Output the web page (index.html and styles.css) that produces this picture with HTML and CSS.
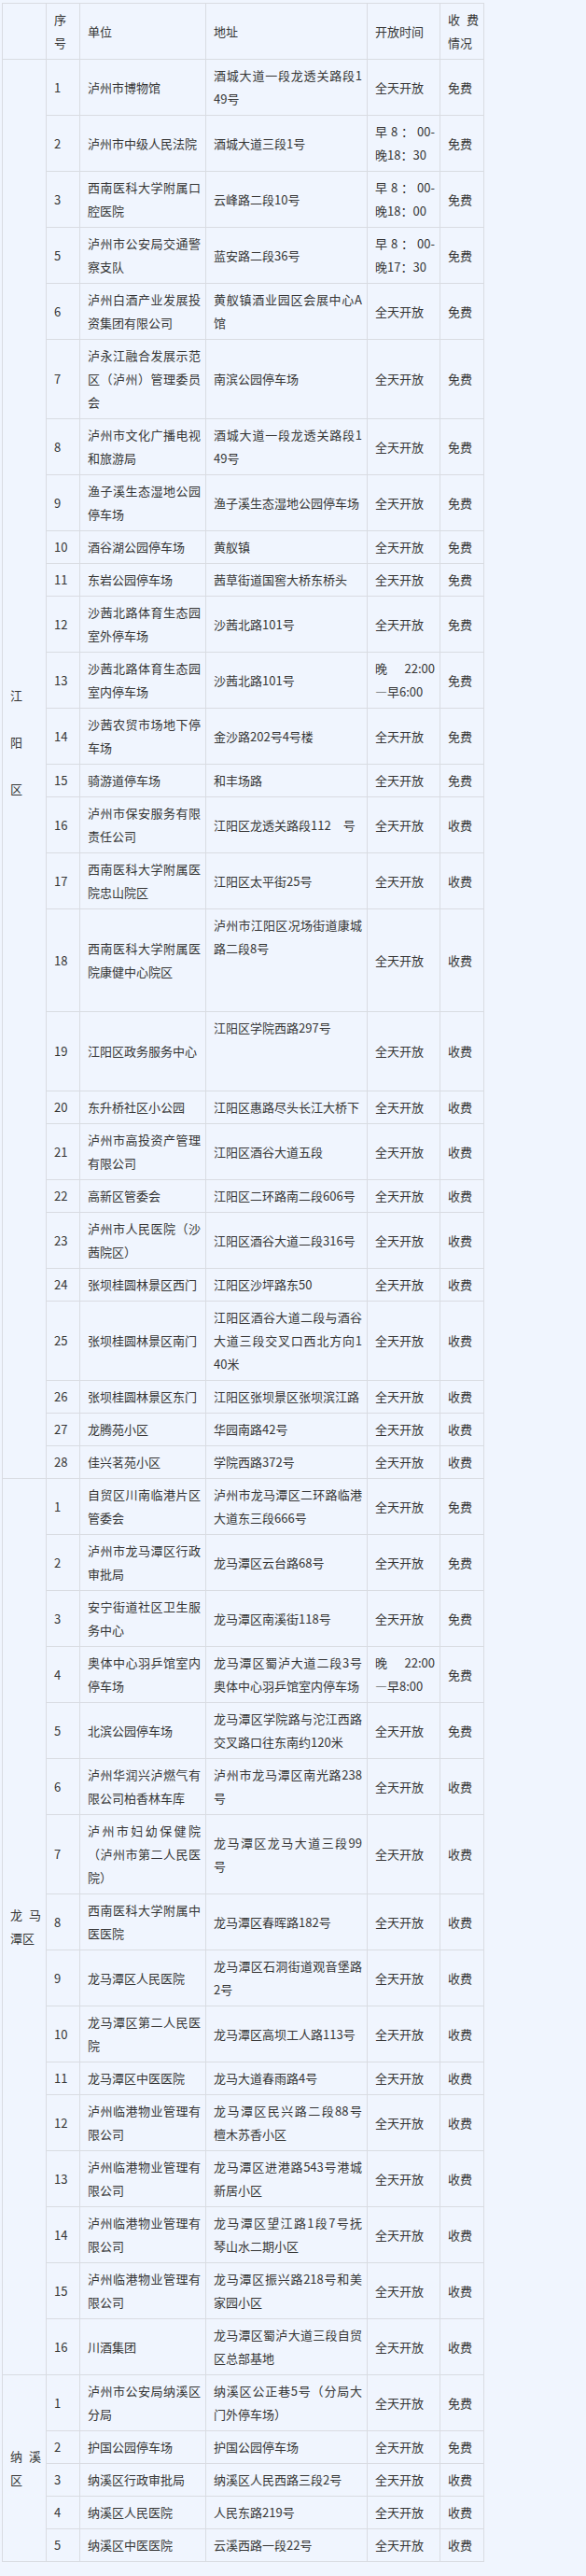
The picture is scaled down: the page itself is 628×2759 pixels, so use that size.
FILE: index.html
```html
<!DOCTYPE html>
<html lang="zh-CN">
<head>
<meta charset="utf-8">
<title>停车场开放名单</title>
<link rel="stylesheet" href="styles.css">
</head>
<body>
<div class="wrap">
<table class="list">
<colgroup>
<col class="w-dist"><col class="w-no"><col class="w-unit"><col class="w-addr"><col class="w-time"><col class="w-fee">
</colgroup>
<thead>
<tr><th></th><th>序<br>号</th><th>单位</th><th>地址</th><th>开放时间</th><th><span class="j">收费</span>情况</th></tr>
</thead>
<tbody>
<tr><td rowspan="27" class="dist jy">江<br><br>阳<br><br>区</td><td>1</td><td>泸州市博物馆</td><td><span class="j">酒城大道一段龙透关路段1</span>49号</td><td>全天开放</td><td>免费</td></tr>
<tr><td>2</td><td>泸州市中级人民法院</td><td>酒城大道三段1号</td><td><span class="j">早8：00-</span>晚18：30</td><td>免费</td></tr>
<tr><td>3</td><td><span class="j">西南医科大学附属口</span>腔医院</td><td>云峰路二段10号</td><td><span class="j">早8：00-</span>晚18：00</td><td>免费</td></tr>
<tr><td>5</td><td><span class="j">泸州市公安局交通警</span>察支队</td><td>蓝安路二段36号</td><td><span class="j">早8：00-</span>晚17：30</td><td>免费</td></tr>
<tr><td>6</td><td><span class="j">泸州白酒产业发展投</span>资集团有限公司</td><td><span class="j">黄舣镇酒业园区会展中心A</span>馆</td><td>全天开放</td><td>免费</td></tr>
<tr><td>7</td><td><span class="j">泸永江融合发展示范</span><span class="j">区（泸州）管理委员</span>会</td><td>南滨公园停车场</td><td>全天开放</td><td>免费</td></tr>
<tr><td>8</td><td><span class="j">泸州市文化广播电视</span>和旅游局</td><td><span class="j">酒城大道一段龙透关路段1</span>49号</td><td>全天开放</td><td>免费</td></tr>
<tr><td>9</td><td><span class="j">渔子溪生态湿地公园</span>停车场</td><td>渔子溪生态湿地公园停车场</td><td>全天开放</td><td>免费</td></tr>
<tr><td>10</td><td>酒谷湖公园停车场</td><td>黄舣镇</td><td>全天开放</td><td>免费</td></tr>
<tr><td>11</td><td>东岩公园停车场</td><td>茜草街道国窖大桥东桥头</td><td>全天开放</td><td>免费</td></tr>
<tr><td>12</td><td><span class="j">沙茜北路体育生态园</span>室外停车场</td><td>沙茜北路101号</td><td>全天开放</td><td>免费</td></tr>
<tr><td>13</td><td><span class="j">沙茜北路体育生态园</span>室内停车场</td><td>沙茜北路101号</td><td><span class="j">晚 22:00</span>—早6:00</td><td>免费</td></tr>
<tr><td>14</td><td><span class="j">沙茜农贸市场地下停</span>车场</td><td>金沙路202号4号楼</td><td>全天开放</td><td>免费</td></tr>
<tr><td>15</td><td>骑游道停车场</td><td>和丰场路</td><td>全天开放</td><td>免费</td></tr>
<tr><td>16</td><td><span class="j">泸州市保安服务有限</span>责任公司</td><td>江阳区龙透关路段112　号</td><td>全天开放</td><td>收费</td></tr>
<tr><td>17</td><td><span class="j">西南医科大学附属医</span>院忠山院区</td><td>江阳区太平街25号</td><td>全天开放</td><td>收费</td></tr>
<tr><td>18</td><td><span class="j">西南医科大学附属医</span>院康健中心院区</td><td class="tail2"><span class="j">泸州市江阳区况场街道康城</span>路二段8号</td><td>全天开放</td><td>收费</td></tr>
<tr><td>19</td><td>江阳区政务服务中心</td><td class="tail2">江阳区学院西路297号</td><td>全天开放</td><td>收费</td></tr>
<tr><td>20</td><td>东升桥社区小公园</td><td>江阳区惠路尽头长江大桥下</td><td>全天开放</td><td>收费</td></tr>
<tr><td>21</td><td><span class="j">泸州市高投资产管理</span>有限公司</td><td>江阳区酒谷大道五段</td><td>全天开放</td><td>收费</td></tr>
<tr><td>22</td><td>高新区管委会</td><td>江阳区二环路南二段606号</td><td>全天开放</td><td>收费</td></tr>
<tr><td>23</td><td><span class="j">泸州市人民医院（沙</span>茜院区）</td><td>江阳区酒谷大道二段316号</td><td>全天开放</td><td>收费</td></tr>
<tr><td>24</td><td>张坝桂圆林景区西门</td><td>江阳区沙坪路东50</td><td>全天开放</td><td>收费</td></tr>
<tr><td>25</td><td>张坝桂圆林景区南门</td><td><span class="j">江阳区酒谷大道二段与酒谷</span><span class="j">大道三段交叉口西北方向1</span>40米</td><td>全天开放</td><td>收费</td></tr>
<tr><td>26</td><td>张坝桂圆林景区东门</td><td>江阳区张坝景区张坝滨江路</td><td>全天开放</td><td>收费</td></tr>
<tr><td>27</td><td>龙腾苑小区</td><td>华园南路42号</td><td>全天开放</td><td>收费</td></tr>
<tr><td>28</td><td>佳兴茗苑小区</td><td>学院西路372号</td><td>全天开放</td><td>收费</td></tr>

<tr><td rowspan="16" class="dist"><span class="j">龙马</span>潭区</td><td>1</td><td><span class="j">自贸区川南临港片区</span>管委会</td><td><span class="j">泸州市龙马潭区二环路临港</span>大道东三段666号</td><td>全天开放</td><td>免费</td></tr>
<tr><td>2</td><td><span class="j">泸州市龙马潭区行政</span>审批局</td><td>龙马潭区云台路68号</td><td>全天开放</td><td>免费</td></tr>
<tr><td>3</td><td><span class="j">安宁街道社区卫生服</span>务中心</td><td>龙马潭区南溪街118号</td><td>全天开放</td><td>免费</td></tr>
<tr><td>4</td><td><span class="j">奥体中心羽乒馆室内</span>停车场</td><td><span class="j">龙马潭区蜀泸大道二段3号</span>奥体中心羽乒馆室内停车场</td><td><span class="j">晚 22:00</span>—早8:00</td><td>免费</td></tr>
<tr><td>5</td><td>北滨公园停车场</td><td><span class="j">龙马潭区学院路与沱江西路</span>交叉路口往东南约120米</td><td>全天开放</td><td>免费</td></tr>
<tr><td>6</td><td><span class="j">泸州华润兴泸燃气有</span>限公司柏香林车库</td><td><span class="j">泸州市龙马潭区南光路238</span>号</td><td>全天开放</td><td>收费</td></tr>
<tr><td>7</td><td><span class="j">泸州市妇幼保健院</span><span class="j">（泸州市第二人民医</span>院）</td><td><span class="j">龙马潭区龙马大道三段99</span>号</td><td>全天开放</td><td>收费</td></tr>
<tr><td>8</td><td><span class="j">西南医科大学附属中</span>医医院</td><td>龙马潭区春晖路182号</td><td>全天开放</td><td>收费</td></tr>
<tr><td>9</td><td>龙马潭区人民医院</td><td><span class="j">龙马潭区石洞街道观音堡路</span>2号</td><td>全天开放</td><td>收费</td></tr>
<tr><td>10</td><td><span class="j">龙马潭区第二人民医</span>院</td><td>龙马潭区高坝工人路113号</td><td>全天开放</td><td>收费</td></tr>
<tr><td>11</td><td>龙马潭区中医医院</td><td>龙马大道春雨路4号</td><td>全天开放</td><td>收费</td></tr>
<tr><td>12</td><td><span class="j">泸州临港物业管理有</span>限公司</td><td><span class="j">龙马潭区民兴路二段88号</span>檀木苏香小区</td><td>全天开放</td><td>收费</td></tr>
<tr><td>13</td><td><span class="j">泸州临港物业管理有</span>限公司</td><td><span class="j">龙马潭区进港路543号港城</span>新居小区</td><td>全天开放</td><td>收费</td></tr>
<tr><td>14</td><td><span class="j">泸州临港物业管理有</span>限公司</td><td><span class="j">龙马潭区望江路1段7号抚</span>琴山水二期小区</td><td>全天开放</td><td>收费</td></tr>
<tr><td>15</td><td><span class="j">泸州临港物业管理有</span>限公司</td><td><span class="j">龙马潭区振兴路218号和美</span>家园小区</td><td>全天开放</td><td>收费</td></tr>
<tr><td>16</td><td>川酒集团</td><td><span class="j">龙马潭区蜀泸大道三段自贸</span>区总部基地</td><td>全天开放</td><td>收费</td></tr>

<tr><td rowspan="5" class="dist"><span class="j">纳溪</span>区</td><td>1</td><td><span class="j">泸州市公安局纳溪区</span>分局</td><td><span class="j">纳溪区公正巷5号（分局大</span>门外停车场）</td><td>全天开放</td><td>免费</td></tr>
<tr><td>2</td><td>护国公园停车场</td><td>护国公园停车场</td><td>全天开放</td><td>免费</td></tr>
<tr><td>3</td><td>纳溪区行政审批局</td><td>纳溪区人民西路三段2号</td><td>全天开放</td><td>收费</td></tr>
<tr><td>4</td><td>纳溪区人民医院</td><td>人民东路219号</td><td>全天开放</td><td>收费</td></tr>
<tr><td>5</td><td>纳溪区中医医院</td><td>云溪西路一段22号</td><td>全天开放</td><td>收费</td></tr>
</tbody>
</table>
</div>
</body>
</html>
```

FILE: styles.css
```css
html {
  background: #f0f5fe;
}

body {
  margin: 0;
  font-family: "Noto Sans CJK SC", "Noto Sans", "Liberation Sans", sans-serif;
  font-size: 13px;
  color: #353535;
}

.wrap {
  padding: 3px 0 12px 2px;
}

.list {
  border-collapse: collapse;
  table-layout: fixed;
  width: 516px;
}

.w-dist { width: 47px; }
.w-no { width: 36px; }
.w-unit { width: 135px; }
.w-addr { width: 173px; }
.w-time { width: 78px; }
.w-fee { width: 47px; }

.list th,
.list td {
  border: 1px solid #d9dce2;
  padding: 4px 5px 5px 8px;
  line-height: 25px;
  text-align: left;
  vertical-align: middle;
  font-weight: normal;
  word-break: break-all;
}

.j {
  display: block;
  text-align: justify;
  text-align-last: justify;
}

.list td.jy {
  padding-bottom: 63px;
}

.list td.tail2 {
  padding-bottom: 55px;
  vertical-align: top;
}
```
